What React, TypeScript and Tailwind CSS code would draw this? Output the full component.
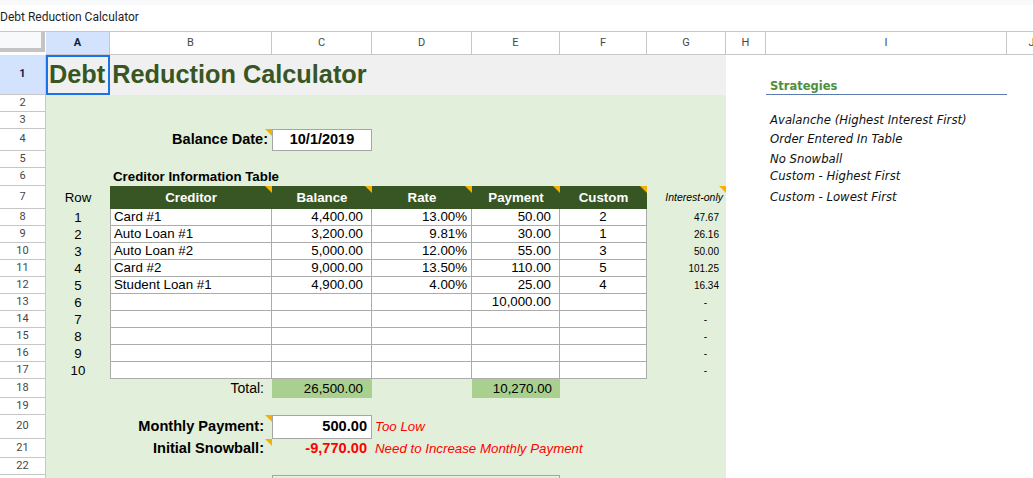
import React from 'react';

const sheet = { fontFamily: '"Liberation Sans", Arial, sans-serif' };
const ui = { fontFamily: 'Roboto, "Liberation Sans", sans-serif' };
const verdana = { fontFamily: '"DejaVu Sans", Verdana, sans-serif' };

function Note() {
    return (
        <span className="absolute top-0 right-0 h-0 w-0 border-t-[7px] border-l-[7px] border-t-[#f6b100] border-l-transparent" />
    );
}

function RowHead({ n, active }: { n: number; active?: boolean }) {
    return (
        <div
            style={ui}
            className={`flex w-[46px] shrink-0 items-center justify-center border-r border-b border-[#c7c7c7] text-[11px] ${
                active ? 'bg-[#d3e3fd] font-bold text-[#0b1f44]' : 'bg-white text-[#444746]'
            }`}
        >
            {n}
        </div>
    );
}

function SheetRow({
    n,
    h,
    children,
    strategy,
}: {
    n: number;
    h: string;
    children?: React.ReactNode;
    strategy?: string;
}) {
    return (
        <div className={`flex ${h}`}>
            <RowHead n={n} />
            <div style={sheet} className="flex w-[680px] shrink-0 bg-[#e2efda] text-[13.3px] text-black">
                {children}
            </div>
            <div className="w-[40px] shrink-0" />
            <div style={verdana} className="flex w-[241px] shrink-0 items-center pl-[4px] text-[11.7px] text-[#111] italic">
                {strategy}
            </div>
        </div>
    );
}

const debts = [
    { name: 'Card #1', bal: '4,400.00', rate: '13.00%', pay: '50.00', custom: '2', int: '47.67' },
    { name: 'Auto Loan #1', bal: '3,200.00', rate: '9.81%', pay: '30.00', custom: '1', int: '26.16' },
    { name: 'Auto Loan #2', bal: '5,000.00', rate: '12.00%', pay: '55.00', custom: '3', int: '50.00' },
    { name: 'Card #2', bal: '9,000.00', rate: '13.50%', pay: '110.00', custom: '5', int: '101.25' },
    { name: 'Student Loan #1', bal: '4,900.00', rate: '4.00%', pay: '25.00', custom: '4', int: '16.34' },
    { name: '', bal: '', rate: '', pay: '10,000.00', custom: '', int: '' },
    { name: '', bal: '', rate: '', pay: '', custom: '', int: '' },
    { name: '', bal: '', rate: '', pay: '', custom: '', int: '' },
    { name: '', bal: '', rate: '', pay: '', custom: '', int: '' },
    { name: '', bal: '', rate: '', pay: '', custom: '', int: '' },
];

const columns = [
    { l: 'A', w: 'w-[64px]' },
    { l: 'B', w: 'w-[162px]' },
    { l: 'C', w: 'w-[100px]' },
    { l: 'D', w: 'w-[100px]' },
    { l: 'E', w: 'w-[88px]' },
    { l: 'F', w: 'w-[87px]' },
    { l: 'G', w: 'w-[79px]' },
    { l: 'H', w: 'w-[40px]' },
    { l: 'I', w: 'w-[241px]' },
    { l: 'J', w: 'w-[50px]' },
];

export default function App() {
    return (
        <div className="h-[478px] w-[1033px] overflow-hidden bg-white">
            <div className="h-[5px] bg-[#f8f9fa]" />
            <div style={ui} className="flex h-[26px] items-center pb-[3px] text-[12px] text-[#1f1f1f]">
                Debt Reduction Calculator
            </div>

            {/* column headers */}
            <div style={ui} className="flex h-[24px] border-t border-[#c7c7c7] text-[11px] text-[#444746]">
                <div className="w-[46px] shrink-0">
                    <div className="h-[20px] w-[45px] border-r-4 border-b-4 border-[#c4c4c4] bg-[#f8f9fa]" />
                </div>
                {columns.map((c) => (
                    <div
                        key={c.l}
                        className={`flex shrink-0 items-center justify-center border-r border-b border-[#c7c7c7] ${c.w} ${
                            c.l === 'A' ? 'bg-[#d3e3fd] font-bold text-[#0b1f44]' : ''
                        }`}
                    >
                        {c.l}
                    </div>
                ))}
            </div>

            {/* row 1 */}
            <div className="flex h-[40px]">
                <RowHead n={1} active />
                <div className="relative flex w-[680px] shrink-0 items-center bg-[#f0f0f0] pl-[3px]">
                    <span style={sheet} className="text-[25.3px] font-bold whitespace-nowrap text-[#375623]">
                        Debt Reduction Calculator
                    </span>
                    <div className="absolute top-0 left-0 h-full w-[64px] border-2 border-[#1a73e8]" />
                </div>
                <div className="w-[40px] shrink-0" />
                <div className="flex w-[241px] shrink-0 items-end border-b border-[#5b7bb0] pl-[4px]">
                    <span style={verdana} className="mb-[-1px] text-[11.5px] font-bold text-[#4f8f3a]">
                        Strategies
                    </span>
                </div>
            </div>

            <SheetRow n={2} h="h-[17px]" />
            <SheetRow n={3} h="h-[17px]" strategy="Avalanche (Highest Interest First)" />
            <SheetRow n={4} h="h-[22px]" strategy="Order Entered In Table">
                <div className="w-[64px] shrink-0" />
                <div className="relative flex w-[162px] shrink-0 items-center justify-end pr-[4px] text-[14.5px] font-bold">
                    Balance Date:
                    <Note />
                </div>
                <div className="flex w-[100px] shrink-0 items-center justify-center border border-[#a6a6a6] bg-white text-[14.5px] font-bold">
                    10/1/2019
                </div>
            </SheetRow>
            <SheetRow n={5} h="h-[17px]" strategy="No Snowball" />
            <SheetRow n={6} h="h-[18px]" strategy="Custom - Highest First">
                <div className="w-[64px] shrink-0" />
                <div className="flex w-[162px] shrink-0 items-center pl-[3px] font-bold whitespace-nowrap">
                    Creditor Information Table
                </div>
            </SheetRow>
            <SheetRow n={7} h="h-[23px]" strategy="Custom - Lowest First">
                <div className="flex w-[64px] shrink-0 items-center justify-center">Row</div>
                <div className="flex w-[537px] shrink-0 bg-[#375623] font-bold text-white">
                    <div className="relative flex w-[162px] items-center justify-center">
                        Creditor
                        <Note />
                    </div>
                    <div className="relative flex w-[100px] items-center justify-center">
                        Balance
                        <Note />
                    </div>
                    <div className="relative flex w-[100px] items-center justify-center">
                        Rate
                        <Note />
                    </div>
                    <div className="relative flex w-[88px] items-center justify-center">
                        Payment
                        <Note />
                    </div>
                    <div className="relative flex w-[87px] items-center justify-center">
                        Custom
                        <Note />
                    </div>
                </div>
                <div className="relative flex w-[79px] shrink-0 items-center justify-end pr-[3px] text-[10.5px] italic">
                    Interest-only
                    <Note />
                </div>
            </SheetRow>

            {debts.map((d, i) => (
                <SheetRow key={i} n={i + 8} h="h-[17px]">
                    <div className="flex w-[64px] shrink-0 items-center justify-center">{i + 1}</div>
                    <div className="flex w-[162px] shrink-0 items-center border-x border-b border-[#ababab] bg-white pl-[3px]">
                        {d.name}
                    </div>
                    <div className="flex w-[100px] shrink-0 items-center justify-end border-r border-b border-[#ababab] bg-white pr-[8px]">
                        {d.bal}
                    </div>
                    <div className="flex w-[100px] shrink-0 items-center justify-end border-r border-b border-[#ababab] bg-white pr-[4px]">
                        {d.rate}
                    </div>
                    <div className="flex w-[88px] shrink-0 items-center justify-end border-r border-b border-[#ababab] bg-white pr-[8px]">
                        {d.pay}
                    </div>
                    <div className="flex w-[87px] shrink-0 items-center justify-center border-r border-b border-[#ababab] bg-white">
                        {d.custom}
                    </div>
                    <div
                        className={`flex w-[79px] shrink-0 items-center justify-end text-[10px] ${
                            d.int ? 'pr-[7px]' : 'pr-[19px]'
                        }`}
                    >
                        {d.int || '-'}
                    </div>
                </SheetRow>
            ))}

            <SheetRow n={18} h="h-[19px]">
                <div className="w-[64px] shrink-0" />
                <div className="flex w-[162px] shrink-0 items-center justify-end pr-[8px] text-[14px]">Total:</div>
                <div className="flex w-[100px] shrink-0 items-center justify-end bg-[#a9d08e] pr-[9px]">26,500.00</div>
                <div className="w-[100px] shrink-0" />
                <div className="flex w-[88px] shrink-0 items-center justify-end bg-[#a9d08e] pr-[8px]">10,270.00</div>
            </SheetRow>
            <SheetRow n={19} h="h-[17px]" />
            <SheetRow n={20} h="h-[24px]">
                <div className="w-[64px] shrink-0" />
                <div className="relative flex w-[162px] shrink-0 items-center justify-end pr-[8px] text-[14.6px] font-bold">
                    Monthly Payment:
                    <Note />
                </div>
                <div className="flex w-[100px] shrink-0 items-center justify-end border border-[#a6a6a6] bg-white pr-[4px] text-[14.6px] font-bold">
                    500.00
                </div>
                <div className="flex w-[100px] shrink-0 items-center pl-[3px] text-[#ff0000] italic">Too Low</div>
            </SheetRow>
            <SheetRow n={21} h="h-[19px]">
                <div className="w-[64px] shrink-0" />
                <div className="relative flex w-[162px] shrink-0 items-center justify-end pr-[8px] text-[14.6px] font-bold">
                    Initial Snowball:
                    <Note />
                </div>
                <div className="flex w-[100px] shrink-0 items-center justify-end pr-[5px] text-[14.6px] font-bold text-[#ff0000]">
                    -9,770.00
                </div>
                <div className="flex w-[100px] shrink-0 items-center pl-[3px] whitespace-nowrap text-[#ff0000] italic">
                    Need to Increase Monthly Payment
                </div>
            </SheetRow>
            <SheetRow n={22} h="h-[17px]" />
            <SheetRow n={23} h="h-[17px]">
                <div className="w-[226px] shrink-0" />
                <div className="w-[288px] shrink-0 border-x border-t border-[#a6a6a6]" />
            </SheetRow>
        </div>
    );
}
